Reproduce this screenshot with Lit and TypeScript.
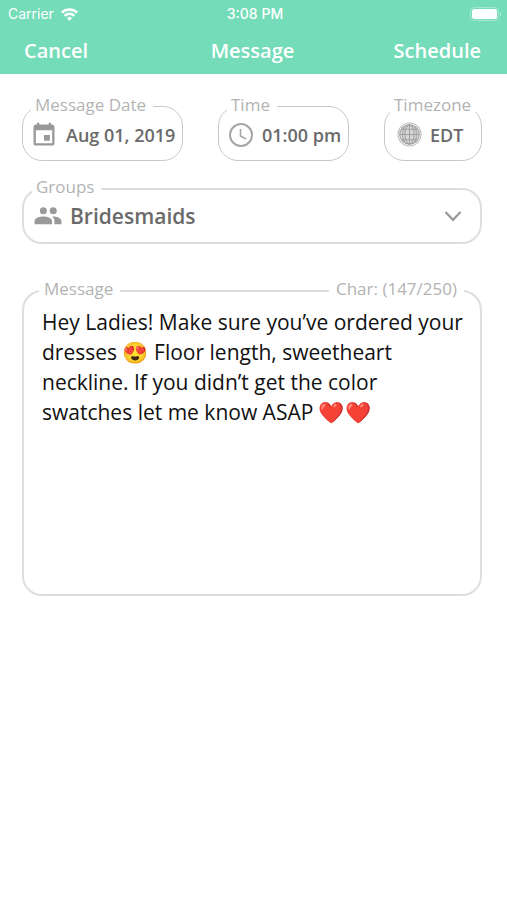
import { LitElement, html, css } from "lit";
import { customElement, state } from "lit/decorators.js";

const LIMIT = 250;

@customElement("app-root")
export class AppRoot extends LitElement {
  static styles = css`
    :host {
      display: block;
      min-height: 100vh;
      background: #fff;
      font-family: "Open Sans", "Noto Sans", sans-serif;
      color: #666;
    }
    * {
      box-sizing: border-box;
    }
    header {
      background: #74dcb9;
      color: #fff;
    }
    .status {
      display: grid;
      grid-template-columns: 1fr auto 1fr;
      align-items: center;
      height: 28px;
      padding: 0 5px 0 8px;
      font: 500 14px/28px Inter, sans-serif;
    }
    .carrier {
      display: flex;
      align-items: center;
      gap: 7px;
      font-weight: 400;
    }
    .battery {
      justify-self: end;
    }
    .nav {
      display: grid;
      grid-template-columns: 1fr auto 1fr;
      align-items: center;
      height: 46px;
      padding: 0 26px 0 24px;
    }
    .nav h1,
    .nav button {
      margin: 0;
      padding: 0;
      border: 0;
      background: none;
      color: inherit;
      font: 600 20px/28px "Open Sans", sans-serif;
    }
    .nav button {
      justify-self: start;
      cursor: pointer;
    }
    .nav button:last-child {
      justify-self: end;
    }
    form {
      display: flex;
      flex-direction: column;
      padding: 32px 25px 24px 22px;
    }
    .row {
      display: flex;
      justify-content: space-between;
      gap: 16px;
      margin-bottom: 27px;
    }
    .field {
      position: relative;
      display: flex;
      align-items: center;
      height: 56px;
      border: 2px solid #dedede;
      border-radius: 20px;
    }
    .row .field {
      height: 55px;
      padding-top: 2px;
      border: 1px solid #c8c8c8;
    }
    .caption {
      position: absolute;
      top: -15px;
      left: 8px;
      padding: 0 7px 0 4px;
      background: #fff;
      color: #b3b3b3;
      font-size: 17px;
      line-height: 24px;
      white-space: nowrap;
    }
    .row .caption {
      top: -14px;
    }
    .date {
      flex: 0 1 161px;
      padding-left: 7px;
    }
    .time {
      flex: 0 1 131px;
      padding-left: 9px;
    }
    .zone {
      flex: 0 1 98px;
      padding-left: 12px;
    }
    .zone .caption {
      left: 5px;
      padding-right: 4px;
    }
    .icon {
      flex: none;
      display: block;
    }
    .value {
      flex: 1;
      min-width: 0;
      width: 100%;
      margin: 0 0 0 8px;
      padding: 0;
      border: 0;
      outline: 0;
      appearance: none;
      background: none;
      color: #6a6a6a;
      font: 600 18px/28px "Open Sans", sans-serif;
    }
    .groups {
      padding: 0 18px 0 10px;
      margin-bottom: 46px;
    }
    .groups .value {
      font-size: 21px;
    }
    .message {
      height: 306px;
      align-items: stretch;
      padding: 15px 16px 16px 18px;
    }
    .message .caption {
      left: 15px;
      padding: 0 7px 0 5px;
    }
    .message .counter {
      left: auto;
      right: 16px;
      padding: 0 7px;
    }
    textarea {
      flex: 1;
      min-width: 0;
      margin: 0;
      padding: 0;
      border: 0;
      outline: 0;
      resize: none;
      background: none;
      color: #111;
      font: 400 21px/30px "Open Sans", "Noto Color Emoji", sans-serif;
    }
  `;

  @state() private text =
    "Hey Ladies! Make sure you’ve ordered your dresses 😍 Floor length, sweetheart neckline. If you didn’t get the color swatches let me know ASAP ❤️❤️";

  @state() private count = 147;

  private onInput(e: Event) {
    this.text = (e.target as HTMLTextAreaElement).value;
    this.count = this.text.length;
  }

  render() {
    return html`
      <header>
        <div class="status">
          <span class="carrier">
            Carrier
            <svg width="17" height="13" viewBox="0 0 17 13" fill="none" stroke="#fff" stroke-width="2.5" aria-hidden="true">
              <path d="M.9 4.700a10.800 10.800 0 0 1 15.200 0M3.700 7.800a6.800 6.800 0 0 1 9.600 0" />
              <path d="M8.500 12.800 5.900 10.200a3.700 3.700 0 0 1 5.200 0z" fill="#fff" stroke="none" />
            </svg>
          </span>
          <span>3:08 PM</span>
          <svg class="battery" width="32" height="14" viewBox="0 0 32 14" aria-hidden="true">
            <rect x=".5" y=".5" width="28" height="13" rx="4" fill="none" stroke="#fff" stroke-opacity=".35" />
            <rect x="2" y="2" width="25" height="10" rx="2.5" fill="#fff" />
            <path d="M30 5q2 2 0 4z" fill="#fff" fill-opacity=".6" />
          </svg>
        </div>
        <nav class="nav">
          <button type="button">Cancel</button>
          <h1>Message</h1>
          <button type="submit" form="compose">Schedule</button>
        </nav>
      </header>

      <form id="compose" @submit=${(e: Event) => e.preventDefault()}>
        <div class="row">
          <div class="field date">
            <label class="caption" for="date">Message Date</label>
            <svg class="icon" width="28" height="28" viewBox="0 0 24 24" fill="#999" aria-hidden="true">
              <path d="M17 12h-5v5h5v-5zM16 1.500v1.500H8V1.500H6v1.500H5c-1.110 0-1.990.9-1.990 2L3 19c0 1.100.890 2 2 2h14c1.100 0 2-.9 2-2V5c0-1.100-.9-2-2-2h-1V1.500h-2zm3 17.500H5V8h14v11z" />
            </svg>
            <input class="value" id="date" type="text" value="Aug 01, 2019" />
          </div>
          <div class="field time">
            <label class="caption" for="time">Time</label>
            <svg class="icon" width="26" height="26" viewBox="0 0 26 26" fill="none" stroke="#a6a6a6" stroke-width="2" aria-hidden="true">
              <circle cx="13" cy="13" r="11" />
              <path d="M12.500 7v7l5.500 3" stroke-width="1.600" />
            </svg>
            <input class="value" id="time" type="text" value="01:00 pm" />
          </div>
          <div class="field zone">
            <label class="caption" for="zone">Timezone</label>
            <svg class="icon" width="25" height="25" viewBox="0 0 25 25" fill="none" stroke="#a0a0a0" stroke-width="1.100" aria-hidden="true">
              <circle cx="12.500" cy="12.500" r="11.500" stroke="#bcbcbc" />
              <circle cx="12.500" cy="12.500" r="9.800" fill="#d8d8d8" />
              <ellipse cx="12.500" cy="12.500" rx="4.500" ry="9.800" />
              <path d="M12.500 2.700v19.600M2.700 12.500h19.600M4.500 7.300h16M4.500 17.700h16" />
              <path d="M7.300 4.500q-3.500 8 0 16M17.700 4.500q3.500 8 0 16" />
            </svg>
            <select class="value" id="zone">
              <option>EDT</option>
            </select>
          </div>
        </div>

        <div class="field groups">
          <label class="caption" for="groups">Groups</label>
          <svg class="icon" width="28" height="28" viewBox="0 0 24 24" fill="#999" aria-hidden="true">
            <path d="M16.500 10.500a3 3 0 1 0 0-6 3 3 0 0 0 0 6zM8 10.500a3 3 0 1 0 0-6 3 3 0 0 0 0 6zM8 12.500c-2.800 0-7.500 1.200-7.500 4v2.500h15V16.500c0-2.800-4.700-4-7.500-4zM16.500 12.500l-1 .05c1.200.85 2 2.100 2 3.950v2.500h6V16.500c0-2.800-4.300-4-7-4z" />
          </svg>
          <select class="value" id="groups">
            <option>Bridesmaids</option>
          </select>
          <svg class="icon" width="18" height="12" viewBox="0 0 18 12" fill="none" stroke="#999" stroke-width="2.200" aria-hidden="true">
            <path d="M1.500 2 9 9.800 16.500 2" />
          </svg>
        </div>

        <div class="field message">
          <label class="caption" for="message">Message</label>
          <output class="caption counter" for="message">Char: (${this.count}/${LIMIT})</output>
          <textarea id="message" maxlength=${LIMIT} spellcheck="false" .value=${this.text} @input=${this.onInput}></textarea>
        </div>
      </form>
    `;
  }
}
